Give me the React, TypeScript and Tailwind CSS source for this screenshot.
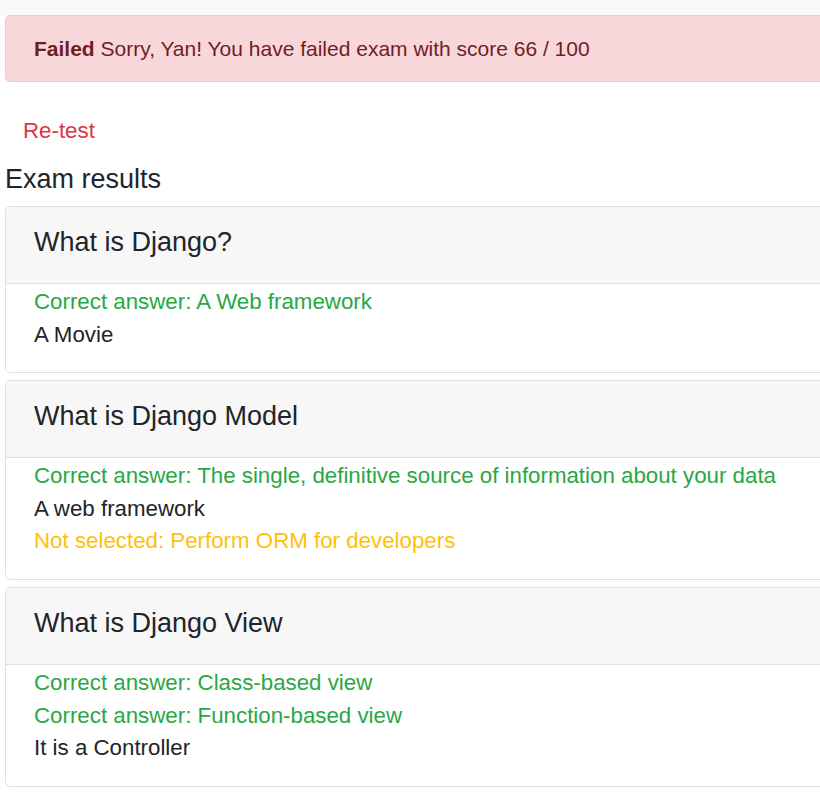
import type React from "react"

type Line = { kind: "correct" | "chosen" | "missed"; text: string }

const questions: { title: string; lines: Line[] }[] = [
  {
    title: "What is Django?",
    lines: [
      { kind: "correct", text: "Correct answer: A Web framework" },
      { kind: "chosen", text: "A Movie" },
    ],
  },
  {
    title: "What is Django Model",
    lines: [
      { kind: "correct", text: "Correct answer: The single, definitive source of information about your data" },
      { kind: "chosen", text: "A web framework" },
      { kind: "missed", text: "Not selected: Perform ORM for developers" },
    ],
  },
  {
    title: "What is Django View",
    lines: [
      { kind: "correct", text: "Correct answer: Class-based view" },
      { kind: "correct", text: "Correct answer: Function-based view" },
      { kind: "chosen", text: "It is a Controller" },
    ],
  },
]

const lineColor: Record<Line["kind"], string> = {
  correct: "text-[#28a745]",
  chosen: "text-[#212529]",
  missed: "text-[#ffc107]",
}

function QuestionCard({ title, lines }: { title: string; lines: Line[] }) {
  return (
    <div className="w-[900px] rounded-[5px] border border-[#dfdfdf] bg-white">
      <div className="flex h-[77px] items-center border-b border-[#dfdfdf] bg-[#f7f7f7] px-[28px] pb-[6px] rounded-t-[5px]">
        <h5 className="text-[27px] leading-[32px] text-[#212529]">{title}</h5>
      </div>
      <div className="px-[28px] pt-[2px] pb-[21px] text-[22.3px] leading-[32.6px]">
        {lines.map((l, i) => (
          <div key={i} className={lineColor[l.kind]}>
            {l.text}
          </div>
        ))}
      </div>
    </div>
  )
}

export default function App() {
  return (
    <div className="min-h-screen w-full overflow-hidden bg-white font-['Liberation_Sans',Arial,sans-serif]">
      <div className="h-[15px] bg-[#f8f9fa]" />
      <div className="pl-[5px]">
        <div className="w-[900px] rounded-[5px] border border-[#f5c6cb] bg-[#f8d7da] px-[28px] py-[16px] text-[21px] leading-[33px] text-[#721c24]">
          <b className="font-bold">Failed</b> Sorry, Yan! You have failed exam with score 66 / 100
        </div>
        <div className="mt-[32px] pl-[18px] text-[22.3px] leading-[33px] text-[#dc3545]">Re-test</div>
        <h4 className="mt-[16px] text-[27px] leading-[32px] text-[#212529]">Exam results</h4>
        <div className="mt-[11px] flex flex-col gap-[7px]">
          {questions.map((q) => (
            <QuestionCard key={q.title} title={q.title} lines={q.lines} />
          ))}
        </div>
      </div>
    </div>
  )
}
